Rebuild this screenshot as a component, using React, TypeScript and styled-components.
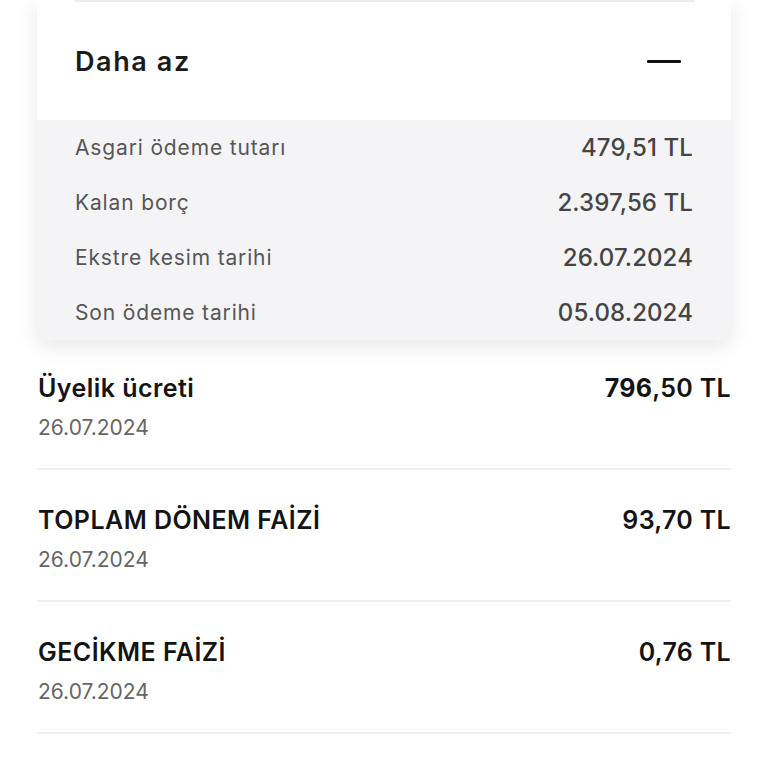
import React from "react";
import styled, { createGlobalStyle } from "styled-components";

const GlobalStyle = createGlobalStyle`
  html, body { margin: 0; padding: 0; background: #ffffff; }
  body { font-family: Inter, "Noto Sans", sans-serif; -webkit-font-smoothing: antialiased; }
  * { box-sizing: border-box; }
`;

const Page = styled.div`
  width: 768px;
  height: 768px;
  overflow: hidden;
  background: #ffffff;
  padding: 0 37px;
`;

const Card = styled.section`
  background: #ffffff;
  border-radius: 0 0 14px 14px;
  box-shadow: 0 6px 22px rgba(0, 0, 0, 0.1);
  overflow: hidden;
`;

const Header = styled.div`
  height: 120px;
  margin: 0 36px 0 38px;
  border-top: 2px solid #ededed;
  display: flex;
  align-items: center;
  justify-content: space-between;
`;

const HeaderTitle = styled.span`
  font-size: 27px;
  font-weight: 600;
  color: #1b1b1b;
  letter-spacing: 1.6px;
`;

const Minus = styled.span`
  display: block;
  width: 34px;
  height: 3px;
  background: #111;
  margin-right: 14px;
  border-radius: 1px;
`;

const Details = styled.div`
  background: #f4f4f6;
  padding: 0 38px;
`;

const DetailRow = styled.div`
  height: 55px;
  display: flex;
  align-items: center;
  justify-content: space-between;
`;

const DetailLabel = styled.span`
  font-size: 21px;
  font-weight: 400;
  color: #565656;
  letter-spacing: 0.85px;
`;

const DetailValue = styled.span`
  font-size: 24px;
  font-weight: 500;
  color: #444444;
  letter-spacing: 0.1px;
`;

const List = styled.div`
  display: flex;
  flex-direction: column;
`;

const Item = styled.div`
  padding: 36px 0 28px 1px;
  border-bottom: 2px solid #efefef;
  display: flex;
  flex-direction: column;
  gap: 14px;
  &:first-child { padding-top: 34px; }
`;

const ItemTop = styled.div`
  height: 28px;
  display: flex;
  align-items: center;
  justify-content: space-between;
`;

const ItemTitle = styled.span`
  font-size: 25px;
  font-weight: 600;
  color: #141414;
  letter-spacing: 0.45px;
`;

const Amount = styled.span`
  font-size: 25px;
  font-weight: 600;
  color: #141414;
  letter-spacing: 0.3px;
`;

const AmountMain = styled.span<{ $strong?: boolean }>`
  font-weight: ${(p) => (p.$strong ? 700 : 600)};
`;

const ItemDate = styled.span`
  height: 24px;
  line-height: 24px;
  font-size: 21px;
  color: #666666;
`;

const details = [
  { label: "Asgari ödeme tutarı", value: "479,51 TL" },
  { label: "Kalan borç", value: "2.397,56 TL" },
  { label: "Ekstre kesim tarihi", value: "26.07.2024" },
  { label: "Son ödeme tarihi", value: "05.08.2024" },
];

const items = [
  { title: "Üyelik ücreti", main: "796", rest: ",50 TL", strong: true, date: "26.07.2024" },
  { title: "TOPLAM DÖNEM FAİZİ", main: "93", rest: ",70 TL", strong: false, date: "26.07.2024" },
  { title: "GECİKME FAİZİ", main: "0", rest: ",76 TL", strong: false, date: "26.07.2024" },
];

export default function App() {
  return (
    <Page>
      <GlobalStyle />
      <Card>
        <Header>
          <HeaderTitle>Daha az</HeaderTitle>
          <Minus />
        </Header>
        <Details>
          {details.map((d) => (
            <DetailRow key={d.label}>
              <DetailLabel>{d.label}</DetailLabel>
              <DetailValue>{d.value}</DetailValue>
            </DetailRow>
          ))}
        </Details>
      </Card>
      <List>
        {items.map((it) => (
          <Item key={it.title}>
            <ItemTop>
              <ItemTitle>{it.title}</ItemTitle>
              <Amount>
                <AmountMain $strong={it.strong}>{it.main}</AmountMain>
                {it.rest}
              </Amount>
            </ItemTop>
            <ItemDate>{it.date}</ItemDate>
          </Item>
        ))}
        <Item />
      </List>
    </Page>
  );
}
